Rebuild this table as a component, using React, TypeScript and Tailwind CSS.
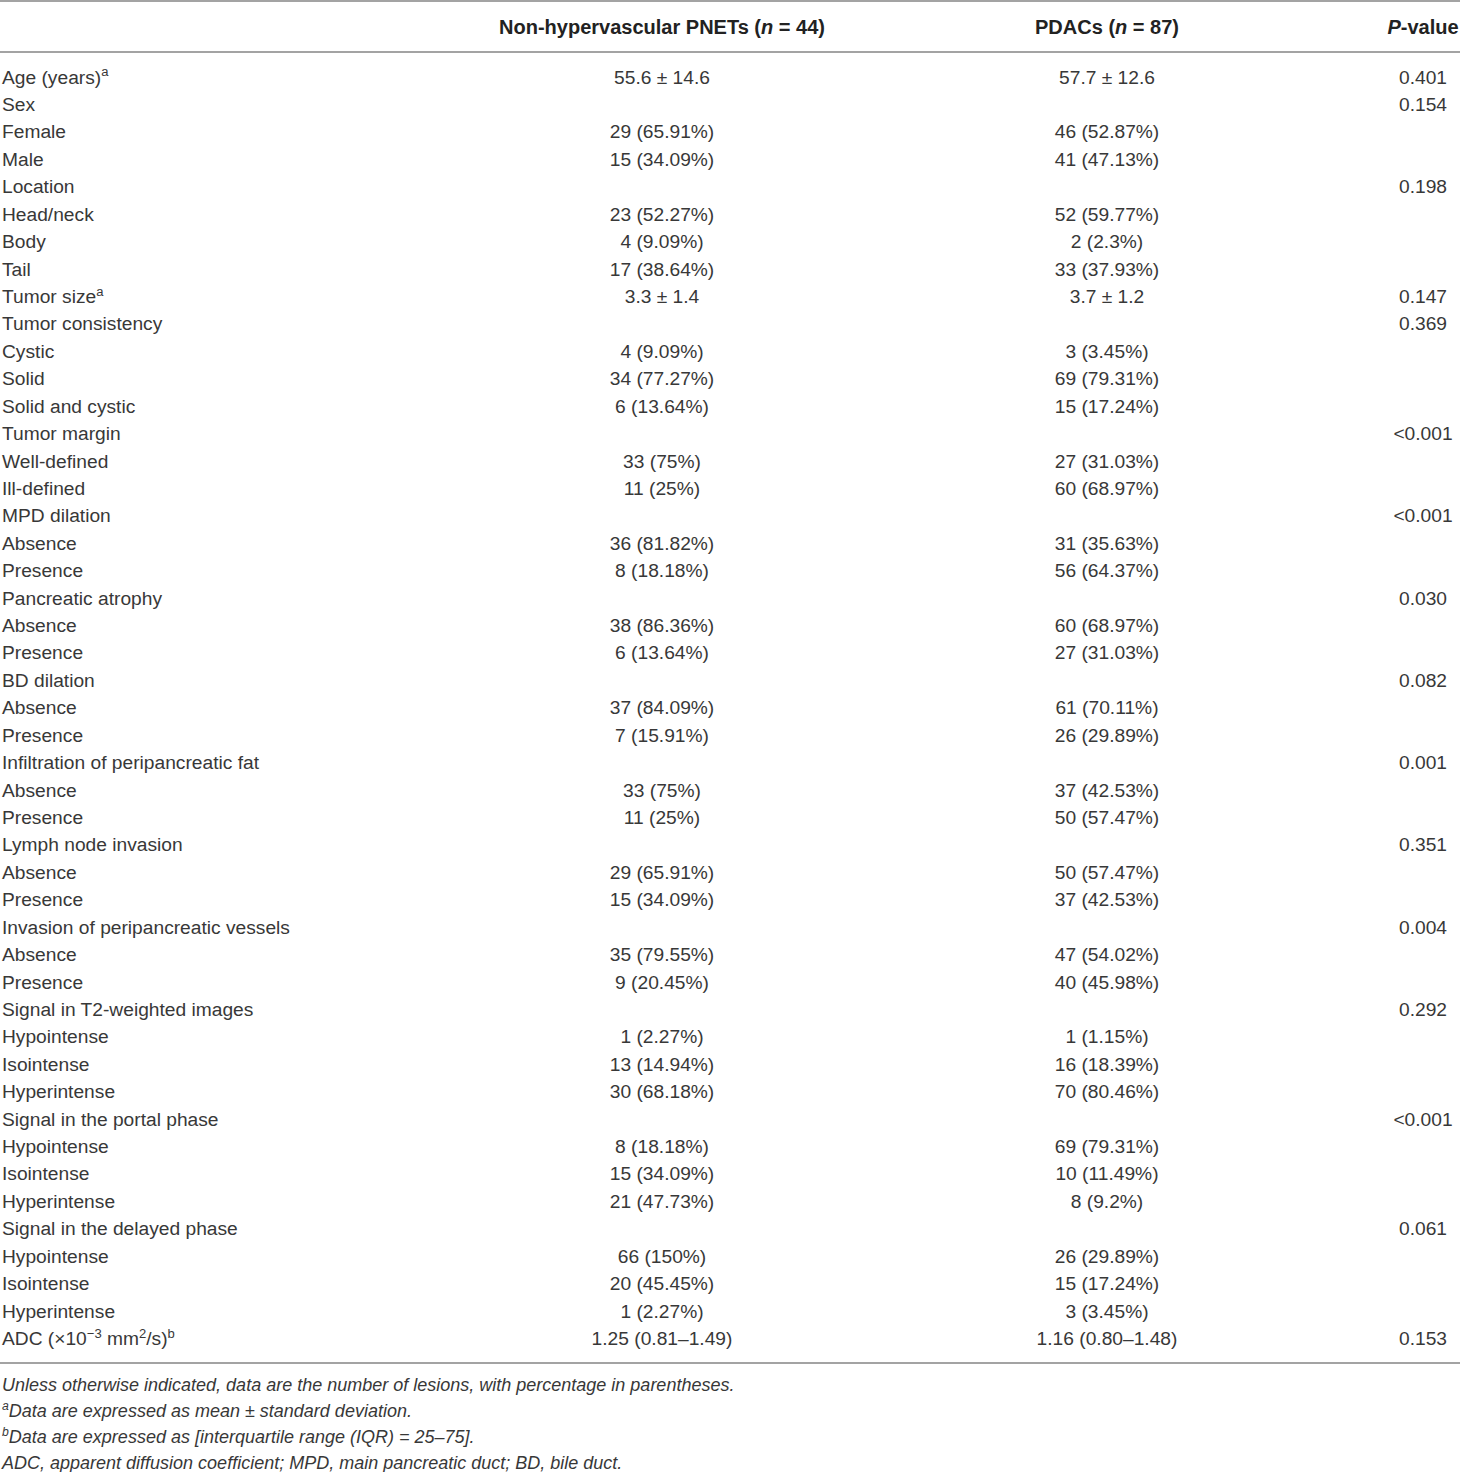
const Sup = ({ children }: { children: React.ReactNode }) => (
  <sup className="text-[0.68em] top-[-0.55em]">{children}</sup>
)

const rows: [React.ReactNode, string, string, string][] = [
  [<>Age (years)<Sup>a</Sup></>, '55.6 ± 14.6', '57.7 ± 12.6', '0.401'],
  ['Sex', '', '', '0.154'],
  ['Female', '29 (65.91%)', '46 (52.87%)', ''],
  ['Male', '15 (34.09%)', '41 (47.13%)', ''],
  ['Location', '', '', '0.198'],
  ['Head/neck', '23 (52.27%)', '52 (59.77%)', ''],
  ['Body', '4 (9.09%)', '2 (2.3%)', ''],
  ['Tail', '17 (38.64%)', '33 (37.93%)', ''],
  [<>Tumor size<Sup>a</Sup></>, '3.3 ± 1.4', '3.7 ± 1.2', '0.147'],
  ['Tumor consistency', '', '', '0.369'],
  ['Cystic', '4 (9.09%)', '3 (3.45%)', ''],
  ['Solid', '34 (77.27%)', '69 (79.31%)', ''],
  ['Solid and cystic', '6 (13.64%)', '15 (17.24%)', ''],
  ['Tumor margin', '', '', '<0.001'],
  ['Well-defined', '33 (75%)', '27 (31.03%)', ''],
  ['Ill-defined', '11 (25%)', '60 (68.97%)', ''],
  ['MPD dilation', '', '', '<0.001'],
  ['Absence', '36 (81.82%)', '31 (35.63%)', ''],
  ['Presence', '8 (18.18%)', '56 (64.37%)', ''],
  ['Pancreatic atrophy', '', '', '0.030'],
  ['Absence', '38 (86.36%)', '60 (68.97%)', ''],
  ['Presence', '6 (13.64%)', '27 (31.03%)', ''],
  ['BD dilation', '', '', '0.082'],
  ['Absence', '37 (84.09%)', '61 (70.11%)', ''],
  ['Presence', '7 (15.91%)', '26 (29.89%)', ''],
  ['Infiltration of peripancreatic fat', '', '', '0.001'],
  ['Absence', '33 (75%)', '37 (42.53%)', ''],
  ['Presence', '11 (25%)', '50 (57.47%)', ''],
  ['Lymph node invasion', '', '', '0.351'],
  ['Absence', '29 (65.91%)', '50 (57.47%)', ''],
  ['Presence', '15 (34.09%)', '37 (42.53%)', ''],
  ['Invasion of peripancreatic vessels', '', '', '0.004'],
  ['Absence', '35 (79.55%)', '47 (54.02%)', ''],
  ['Presence', '9 (20.45%)', '40 (45.98%)', ''],
  ['Signal in T2-weighted images', '', '', '0.292'],
  ['Hypointense', '1 (2.27%)', '1 (1.15%)', ''],
  ['Isointense', '13 (14.94%)', '16 (18.39%)', ''],
  ['Hyperintense', '30 (68.18%)', '70 (80.46%)', ''],
  ['Signal in the portal phase', '', '', '<0.001'],
  ['Hypointense', '8 (18.18%)', '69 (79.31%)', ''],
  ['Isointense', '15 (34.09%)', '10 (11.49%)', ''],
  ['Hyperintense', '21 (47.73%)', '8 (9.2%)', ''],
  ['Signal in the delayed phase', '', '', '0.061'],
  ['Hypointense', '66 (150%)', '26 (29.89%)', ''],
  ['Isointense', '20 (45.45%)', '15 (17.24%)', ''],
  ['Hyperintense', '1 (2.27%)', '3 (3.45%)', ''],
  [
    <>ADC (×10<Sup>−3</Sup> mm<Sup>2</Sup>/s)<Sup>b</Sup></>,
    '1.25 (0.81–1.49)', '1.16 (0.80–1.48)', '0.153',
  ],
]

const grid = 'grid grid-cols-[496px_332px_558px_74px]'

export default function App() {
  return (
    <div className="w-[1460px] bg-white text-[#383838] font-['Liberation_Sans',Arial,sans-serif]">
      <div className="border-t-2 border-[#a3a3a3]" />
      <div className={`${grid} h-[49px] items-center text-[20px] font-bold text-[#222]`}>
        <div />
        <div className="text-center whitespace-nowrap">Non-hypervascular PNETs (<i>n</i> = 44)</div>
        <div className="text-center whitespace-nowrap">PDACs (<i>n</i> = 87)</div>
        <div className="text-center whitespace-nowrap"><i>P</i>-value</div>
      </div>
      <div className="border-t-2 border-[#a3a3a3]" />
      <div className="pt-[10px] pb-[10px] text-[19.2px]">
        {rows.map((r, i) => (
          <div key={i} className={`${grid} h-[27.43px] items-center leading-none pt-[1px]`}>
            <div className="pl-[2px] whitespace-nowrap">{r[0]}</div>
            <div className="text-center">{r[1]}</div>
            <div className="text-center">{r[2]}</div>
            <div className="text-center">{r[3]}</div>
          </div>
        ))}
      </div>
      <div className="border-t-2 border-[#a3a3a3]" />
      <div className="pt-[8px] pl-[2px] italic text-[18px] leading-[26px]">
        <p>Unless otherwise indicated, data are the number of lesions, with percentage in parentheses.</p>
        <p><Sup>a</Sup>Data are expressed as mean ± standard deviation.</p>
        <p><Sup>b</Sup>Data are expressed as [interquartile range (IQR) = 25–75].</p>
        <p>ADC, apparent diffusion coefficient; MPD, main pancreatic duct; BD, bile duct.</p>
      </div>
    </div>
  )
}
